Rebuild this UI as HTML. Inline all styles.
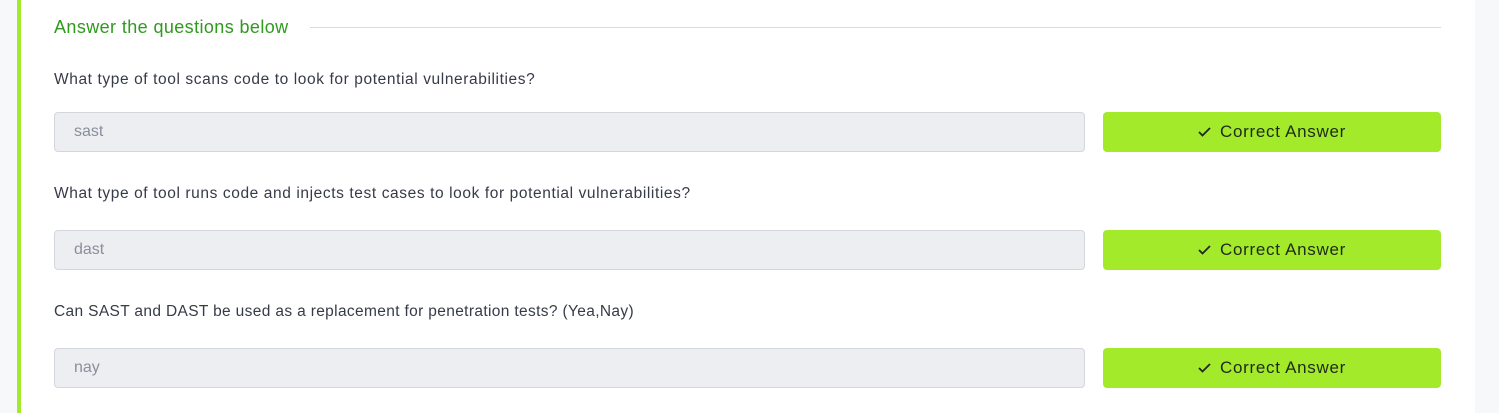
<!DOCTYPE html>
<html><head><meta charset="utf-8"><style>
body{margin:0;width:1499px;height:413px;background:#f7f8fa;font-family:"Liberation Sans",sans-serif;position:relative;overflow:hidden}
.bar{position:absolute;left:17px;top:0;width:4px;height:413px;background:#a3ea2a}
.panel{position:absolute;left:21px;top:0;width:1454px;height:413px;background:#fff}
.h{position:absolute;left:54px;top:17px;font-size:18px;letter-spacing:0.4px;color:#2f9a1e}
.line{position:absolute;left:310px;top:27px;width:1131px;height:1px;background:#d8dbe0}
.q{position:absolute;left:54px;font-size:15.5px;letter-spacing:0.6px;color:#363b47}
.in{position:absolute;left:54px;width:1029px;height:38px;background:#eceef2;border:1px solid #d3d6dc;border-radius:4px;box-sizing:content-box}
.in span{position:absolute;left:19px;top:10px;font-size:16px;color:#8a8f9b}
.btn{position:absolute;left:1103px;width:338px;height:40px;background:#a3ea2a;border-radius:4px;font-size:17px;letter-spacing:0.7px;color:#1f2a1a;display:flex;align-items:center;justify-content:center}
.btn svg{margin-right:9px}
</style></head><body>
<div class="bar"></div><div class="panel"></div>
<div class="h">Answer the questions below</div><div class="line"></div>

<div class="q" style="top:71px">What type of tool scans code to look for potential vulnerabilities?</div>
<div class="in" style="top:112px"><span>sast</span></div>
<div class="btn" style="top:112px"><svg width="13" height="10" viewBox="0 0 13 10"><path d="M1 5 L4.5 8.5 L12 1" fill="none" stroke="#1f2a1a" stroke-width="1.8"/></svg>Correct Answer</div>

<div class="q" style="top:185px">What type of tool runs code and injects test cases to look for potential vulnerabilities?</div>
<div class="in" style="top:230px"><span>dast</span></div>
<div class="btn" style="top:230px"><svg width="13" height="10" viewBox="0 0 13 10"><path d="M1 5 L4.5 8.5 L12 1" fill="none" stroke="#1f2a1a" stroke-width="1.8"/></svg>Correct Answer</div>

<div class="q" style="top:303px;letter-spacing:0.35px">Can SAST and DAST be used as a replacement for penetration tests? (Yea,Nay)</div>
<div class="in" style="top:348px"><span>nay</span></div>
<div class="btn" style="top:348px"><svg width="13" height="10" viewBox="0 0 13 10"><path d="M1 5 L4.5 8.5 L12 1" fill="none" stroke="#1f2a1a" stroke-width="1.8"/></svg>Correct Answer</div>
</body></html>
